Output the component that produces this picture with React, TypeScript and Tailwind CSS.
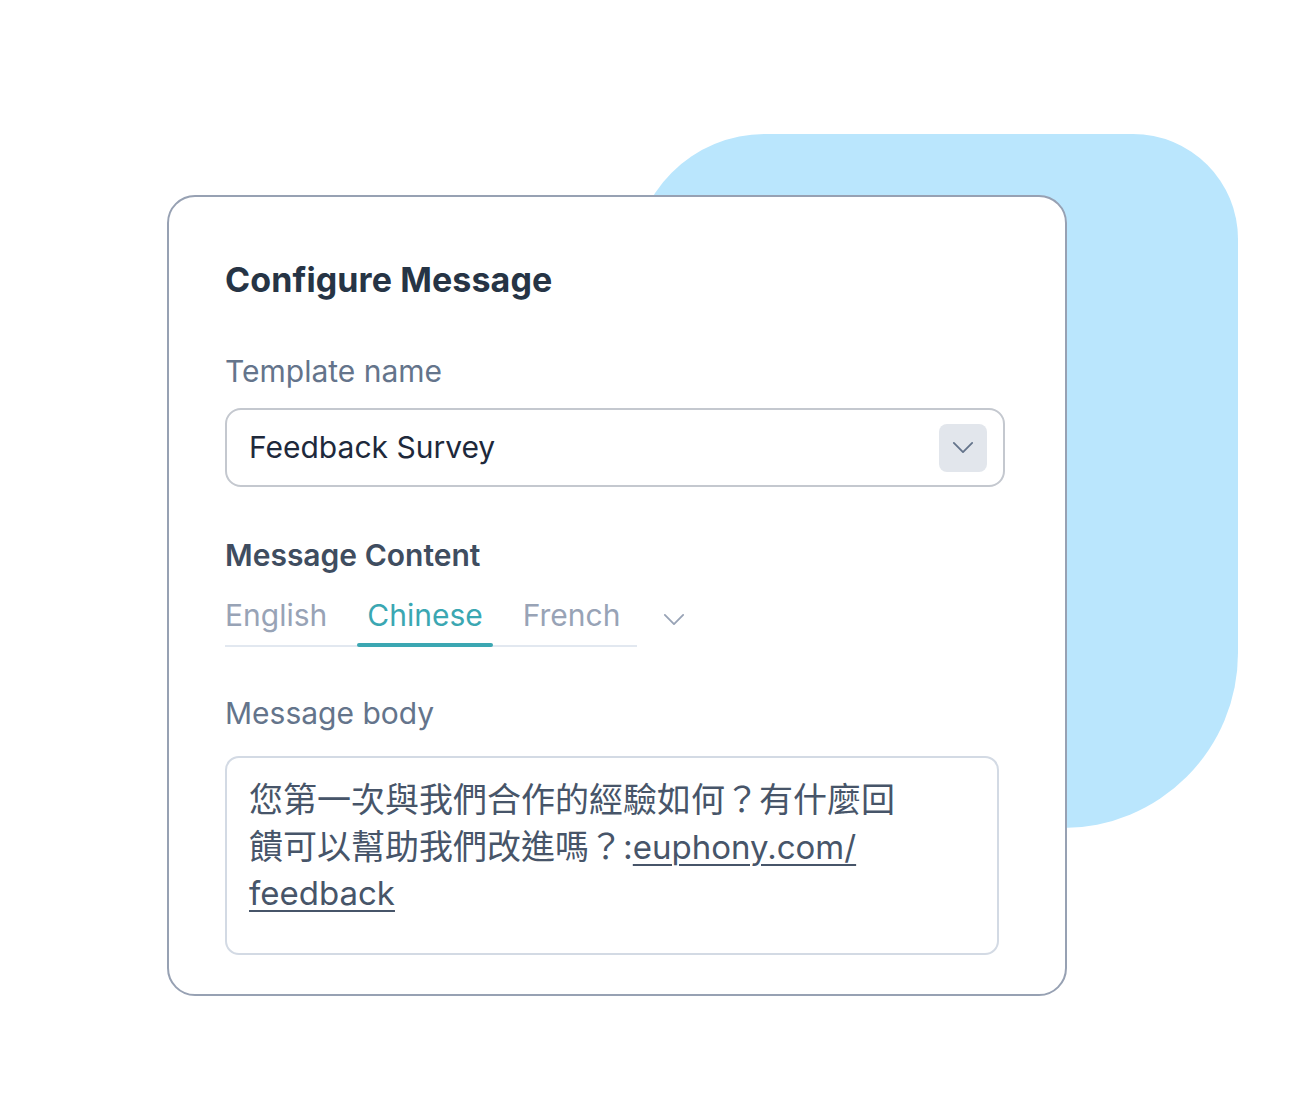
import React, { useState } from "react";

const tabs = ["English", "Chinese", "French"];

function Chevron({ className }: { className?: string }) {
  return (
    <svg viewBox="0 0 24 14" fill="none" className={className}>
      <path d="M2 2l10 10L22 2" stroke="currentColor" strokeWidth="2" strokeLinecap="round" strokeLinejoin="round" />
    </svg>
  );
}

export default function App() {
  const [active, setActive] = useState("Chinese");

  return (
    <div className="w-[1306px] h-[1120px] bg-white grid font-['Inter','Noto_Sans_CJK_TC',sans-serif]">
      <div className="col-start-1 row-start-1 ml-[633px] mt-[134px] w-[605px] h-[694px] bg-[#bae6fd] rounded-tl-[132px] rounded-tr-[105px] rounded-br-[175px]" />

      <div className="col-start-1 row-start-1 relative ml-[167px] mt-[195px] w-[900px] h-[801px] bg-white border-2 border-[#97a1b3] rounded-[28px] pl-[56px] pt-[62px]">
        <h1 className="text-[34px] leading-[42px] font-bold text-[#263445] tracking-[0.1px]">Configure Message</h1>

        <div className="mt-[52px] text-[30px] leading-[36px] text-[#64748b]">Template name</div>

        <div className="mt-[19px] w-[780px] h-[79px] border-2 border-[#c4c8cf] rounded-[16px] flex items-center justify-between pl-[22px] pr-[16px]">
          <span className="text-[30px] text-[#1e293b]">Feedback Survey</span>
          <button className="w-[48px] h-[48px] rounded-[8px] bg-[#e2e6ec] flex items-center justify-center text-[#64748b]">
            <Chevron className="w-[22px] h-[13px]" />
          </button>
        </div>

        <div className="mt-[50px] text-[30px] leading-[36px] font-semibold text-[#3f4d60]">Message Content</div>

        <div className="mt-[24px] flex items-center">
          <div className="flex gap-5 border-b-2 border-[#e2e8f0] w-[412px]">
            {tabs.map((t, i) => (
              <button
                key={t}
                onClick={() => setActive(t)}
                className={
                  "relative pb-[12px] text-[30px] leading-[36px] " +
                  (i === 0 ? "pl-0 pr-[10px] " : "px-[10px] ") +
                  (active === t ? "text-[#3ba7b2]" : "text-[#98a3b6]")
                }
              >
                {t}
                {active === t && (
                  <span className="absolute left-0 right-0 -bottom-[2px] h-[4px] rounded-full bg-[#3ba7b2]" />
                )}
              </button>
            ))}
          </div>
          <Chevron className="ml-[26px] w-[22px] h-[13px] text-[#98a3b6] -mt-[6px]" />
        </div>

        <div className="mt-[48px] text-[30px] leading-[36px] text-[#64748b]">Message body</div>

        <div className="mt-[25px] w-[774px] h-[199px] border-2 border-[#d3dae4] rounded-[14px] pl-[22px] pt-[19px] text-[34px] leading-[46.5px] text-[#475569]">
          您第一次與我們合作的經驗如何？有什麼回
          <br />
          饋可以幫助我們改進嗎？:
          <a className="text-[33px] underline underline-offset-[5px] decoration-[1.5px]">euphony.com/</a>
          <br />
          <a className="text-[33px] underline underline-offset-[5px] decoration-[1.5px]">feedback</a>
        </div>
      </div>
    </div>
  );
}
